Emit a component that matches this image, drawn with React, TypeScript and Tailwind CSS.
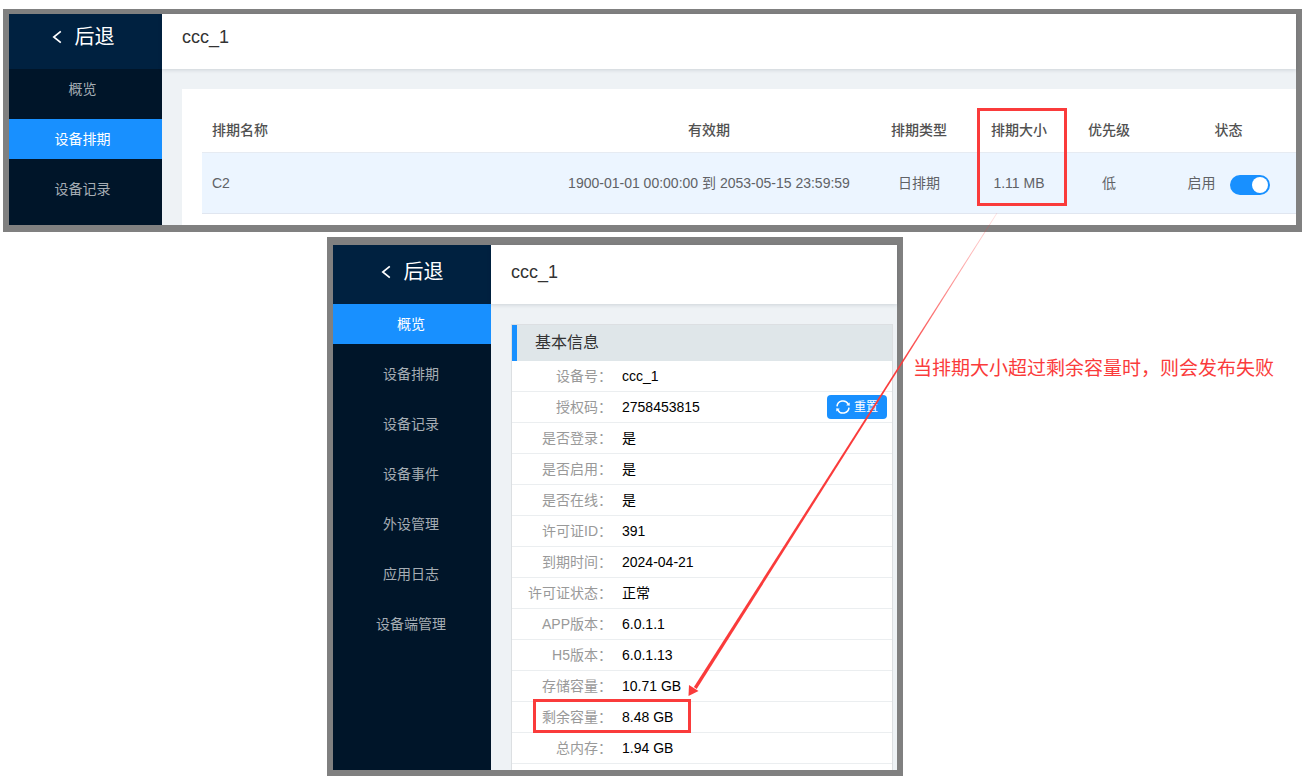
import type { ReactNode } from "react";

type SidebarProps = {
  items: string[];
  active: string;
  headerClass: string;
  itemClass: string;
  className: string;
};

function Sidebar({ items, active, headerClass, itemClass, className }: SidebarProps) {
  return (
    <aside className={`shrink-0 bg-[#001529] pb-4 ${className}`}>
      <button
        type="button"
        className={`flex w-full items-center justify-center gap-[13px] bg-[#002140] text-xl leading-7 text-white ${headerClass}`}
      >
        <svg width="10" height="14" viewBox="0 0 10 14" fill="none" stroke="currentColor" strokeWidth="1.7" aria-hidden="true">
          <path d="M8.8 1.4 1.8 7l7 5.6" />
        </svg>
        后退
      </button>
      <nav className="flex flex-col gap-[10px]">
        {items.map((item) => (
          <a
            key={item}
            href="#"
            className={`block h-10 text-center text-sm leading-10 ${itemClass} ${
              item === active ? "bg-[#1890ff] text-white" : "text-[#a6adb4]"
            }`}
          >
            {item}
          </a>
        ))}
      </nav>
    </aside>
  );
}

function Content({ headerClass, children }: { headerClass: string; children: ReactNode }) {
  return (
    <main className="flex min-w-0 flex-1 flex-col bg-[#eef2f5]">
      <header className={`flex items-center bg-white px-5 shadow-[0_1px_4px_rgba(0,21,41,0.14)] ${headerClass}`}>
        <h1 className="text-lg leading-7 text-[#333]">ccc_1</h1>
      </header>
      {children}
    </main>
  );
}

function SchedulePanel() {
  const head = "border-b border-[#e6ebf2] pb-[2px] font-medium";
  const cell = "border-b border-[#e0e6f0]";
  return (
    <section className="flex border-x-6 border-t-5 border-b-7 border-[#808080]">
      <Sidebar
        items={["概览", "设备排期", "设备记录"]}
        active="设备排期"
        headerClass="h-[55px] pb-[10px] pr-[5px]"
        itemClass="pr-[6px]"
        className="w-[153px]"
      />
      <Content headerClass="h-[55px] pb-[10px]">
        <div className="mt-5 ml-5 flex-1 bg-white pt-5 pl-5">
          <table className="w-full table-fixed border-separate border-spacing-0 text-center text-sm text-[#606266]">
            <colgroup>
              <col />
              <col className="w-[320px]" />
              <col className="w-[100px]" />
              <col className="w-[100px]" />
              <col className="w-[80px]" />
              <col className="w-[147px]" />
            </colgroup>
            <thead>
              <tr className="h-11 text-[#515151]">
                <th className={`${head} pl-[10px] text-left`}>排期名称</th>
                <th className={head}>有效期</th>
                <th className={head}>排期类型</th>
                <th className={`${head} relative`}>
                  排期大小
                  <span className="pointer-events-none absolute -top-px left-2 h-[98px] w-[90px] border-3 border-[#fa3b3b]" />
                </th>
                <th className={head}>优先级</th>
                <th className={`${head} pl-3`}>状态</th>
              </tr>
            </thead>
            <tbody>
              <tr className="h-[61px] bg-[#ecf5ff]">
                <td className={`${cell} pl-[10px] text-left`}>C2</td>
                <td className={cell}>1900-01-01 00:00:00 到 2053-05-15 23:59:59</td>
                <td className={cell}>日排期</td>
                <td className={cell}>1.11 MB</td>
                <td className={cell}>低</td>
                <td className={`${cell} pl-3`}>
                  <label className="flex items-start justify-center gap-[14px] pt-1 leading-4">
                    启用
                    <input
                      type="checkbox"
                      role="switch"
                      defaultChecked
                      className="h-5 w-10 appearance-none rounded-full bg-[#c0ccda] p-[2px] before:block before:size-4 before:rounded-full before:bg-white checked:bg-[#1890ff] checked:before:ml-5"
                    />
                  </label>
                </td>
              </tr>
            </tbody>
          </table>
          <div className="h-[11px]" />
        </div>
      </Content>
    </section>
  );
}

const details: [string, string][] = [
  ["设备号", "ccc_1"],
  ["授权码", "2758453815"],
  ["是否登录", "是"],
  ["是否启用", "是"],
  ["是否在线", "是"],
  ["许可证ID", "391"],
  ["到期时间", "2024-04-21"],
  ["许可证状态", "正常"],
  ["APP版本", "6.0.1.1"],
  ["H5版本", "6.0.1.13"],
  ["存储容量", "10.71 GB"],
  ["剩余容量", "8.48 GB"],
  ["总内存", "1.94 GB"],
];

function ResetButton() {
  return (
    <button
      type="button"
      className="ml-auto mr-[5px] flex h-6 w-[60px] items-center justify-center gap-1 rounded bg-[#1890ff] text-xs text-white"
    >
      <svg width="14" height="14" viewBox="0 0 14 14" fill="none" stroke="currentColor" strokeWidth="1.5" aria-hidden="true">
        <path d="M1 6.4A6 6 0 0 1 12.3 4.2M13 7.6A6 6 0 0 1 1.7 9.8" />
        <path d="M13.7 2.4v3.4l-3.6-.6zM.3 11.6V8.2l3.6.6z" fill="currentColor" stroke="none" />
      </svg>
      重置
    </button>
  );
}

function OverviewPanel() {
  return (
    <section className="flex w-[576px] shrink-0 border-x-6 border-t-8 border-b-6 border-[#808080]">
      <Sidebar
        items={["概览", "设备排期", "设备记录", "设备事件", "外设管理", "应用日志", "设备端管理"]}
        active="概览"
        headerClass="h-[59px] pb-[6px]"
        itemClass="pr-[2px]"
        className="w-[158px]"
      />
      <Content headerClass="h-[59px] pb-[6px]">
        <div className="mt-5 mr-1 ml-5 border border-b-0 border-[#dcdfe2] bg-white pb-[6px]">
          <h2 className="h-9 border-l-5 border-[#1890ff] bg-[#dfe6e9] pl-[18px] text-base leading-9 text-[#333]">
            基本信息
          </h2>
          <dl className="text-sm">
            {details.map(([label, value]) => (
              <div key={label} className="relative flex h-[31px] items-center border-b border-[#ebeef0]">
                <dt className="w-[100px] text-right text-[#999]">{label}：</dt>
                <dd className="flex flex-1 items-center pl-[10px] text-black">
                  {value}
                  {label === "授权码" && <ResetButton />}
                </dd>
                {label === "剩余容量" && (
                  <span className="pointer-events-none absolute -top-[3px] left-[21px] h-[34px] w-[158px] border-3 border-[#fa3b3b]" />
                )}
              </div>
            ))}
          </dl>
        </div>
      </Content>
    </section>
  );
}

function Arrow() {
  return (
    <svg
      className="pointer-events-none absolute -top-6 left-[361px]"
      width="310"
      height="486"
      viewBox="688 213 310 486"
      aria-hidden="true"
    >
      <defs>
        <linearGradient id="fade" gradientUnits="userSpaceOnUse" x1="997" y1="213" x2="900" y2="366">
          <stop offset="0" stopColor="#fa3b3b" stopOpacity="0.15" />
          <stop offset="1" stopColor="#fa3b3b" />
        </linearGradient>
      </defs>
      <path d="M997.3 213.2 696.7 688.9 693.9 687 996.7 212.8z" fill="url(#fade)" />
      <path d="M688.5 696 689 685 698.5 691z" fill="#fa3b3b" />
    </svg>
  );
}

export default function App() {
  return (
    <div className="bg-white pt-[9px] pr-[6px] pb-2 pl-[3px] font-['Liberation_Sans','Noto_Sans_CJK_SC',sans-serif]">
      <SchedulePanel />
      <div className="relative mt-[5px] ml-[324px] flex items-start gap-[10px]">
        <OverviewPanel />
        <p className="mt-[118px] text-[19px] leading-7 text-[#fa3b3b]">当排期大小超过剩余容量时，则会发布失败</p>
        <Arrow />
      </div>
    </div>
  );
}
